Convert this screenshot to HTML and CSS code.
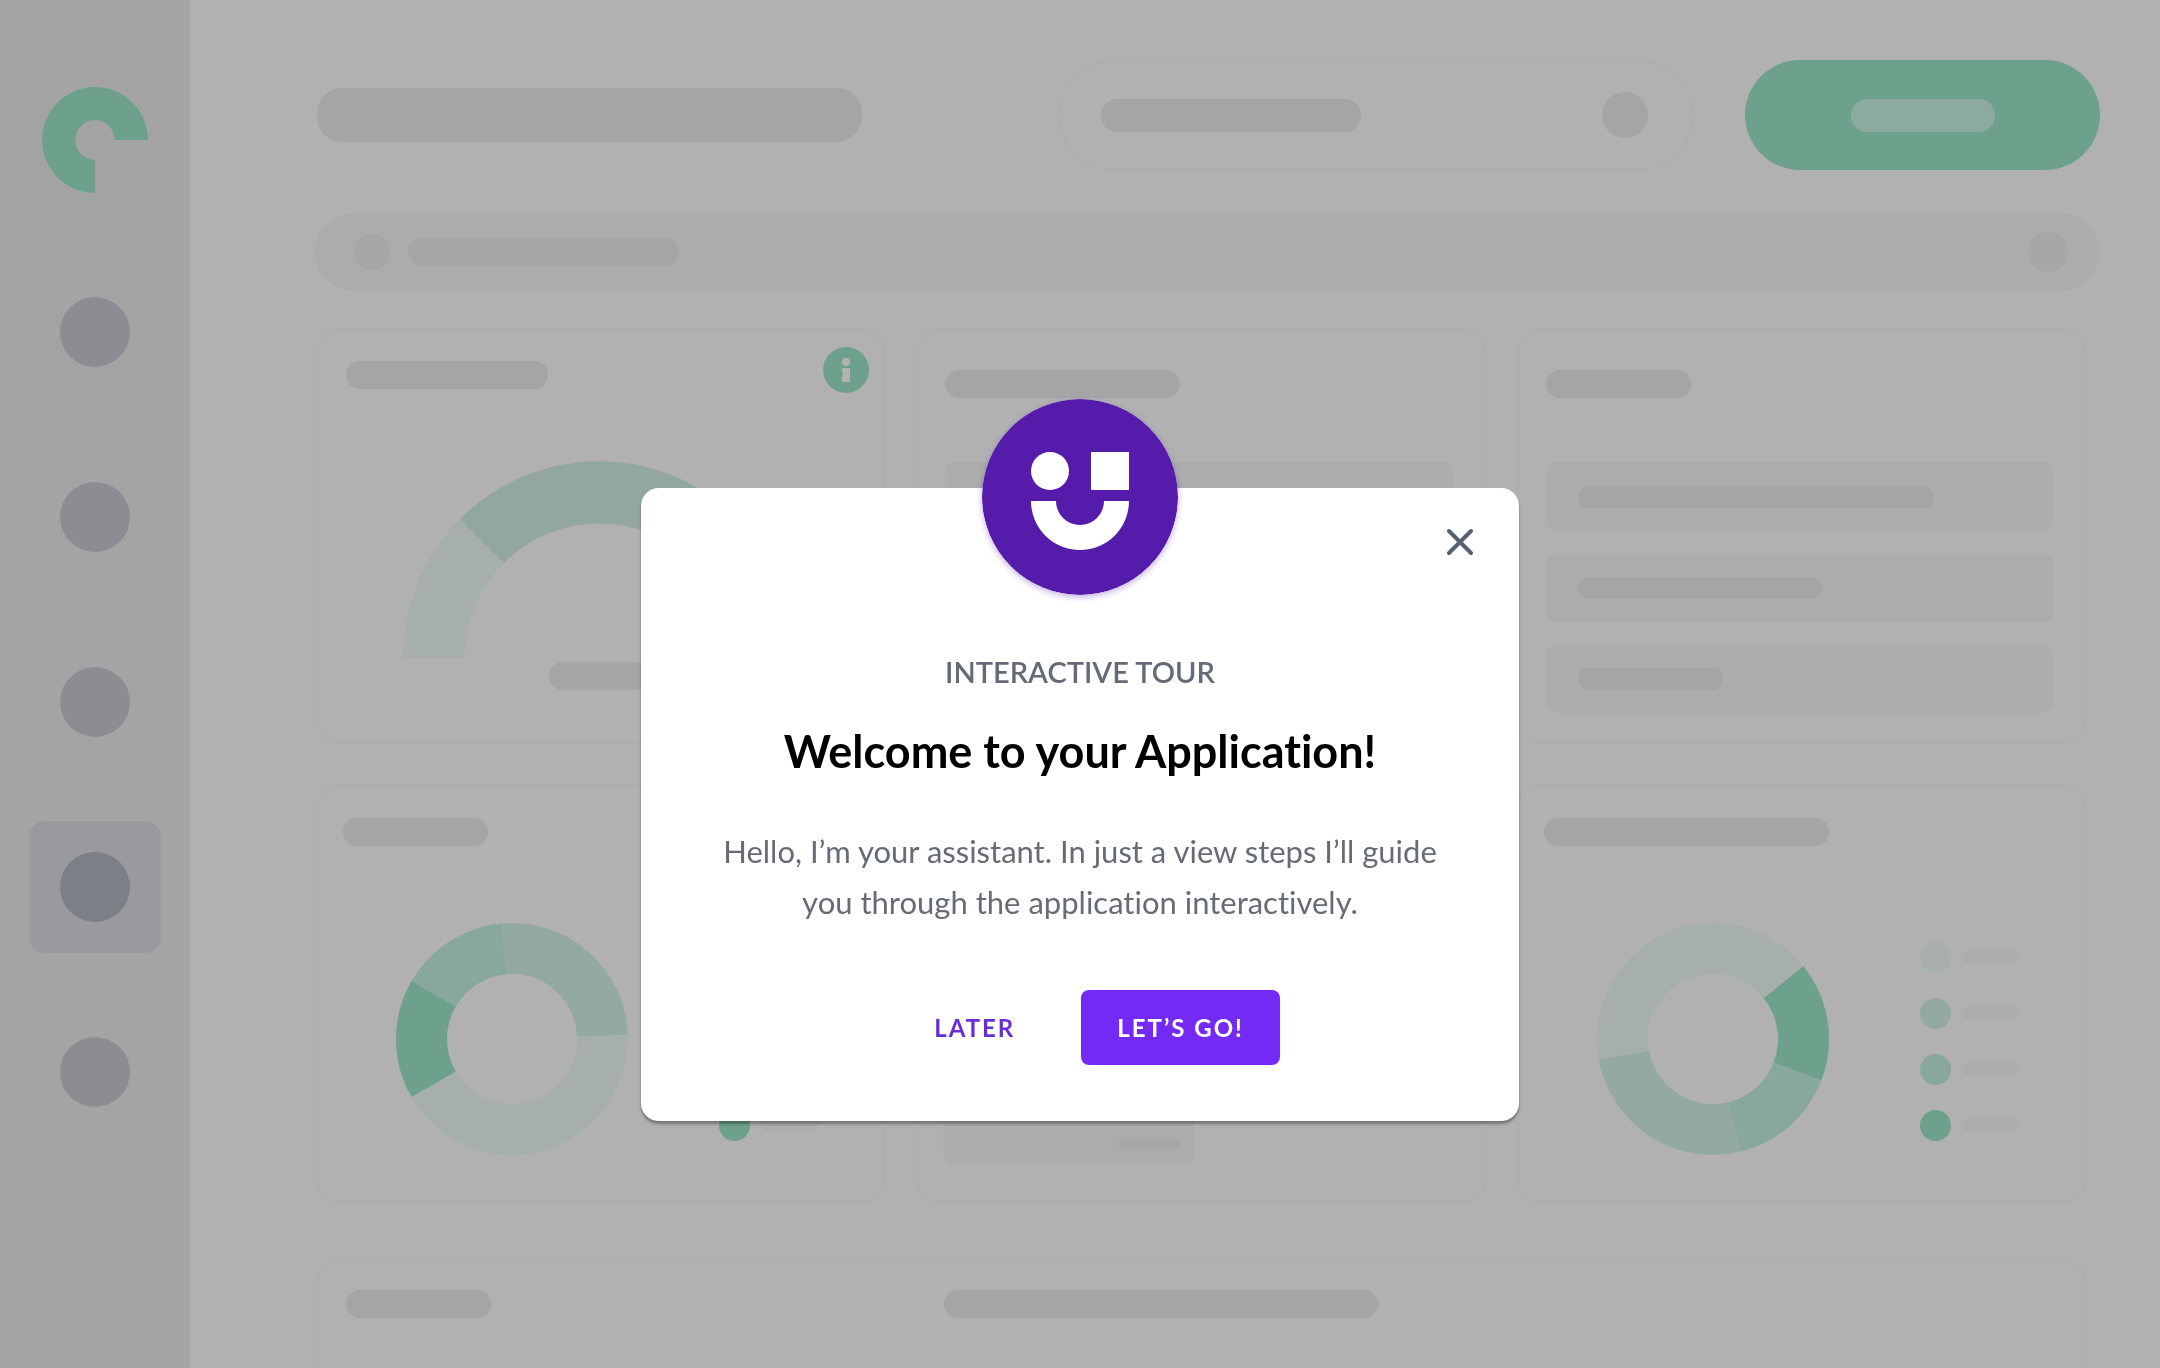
FILE: index.html
```html
<!DOCTYPE html>
<html lang="en">
<head>
<meta charset="utf-8">
<title>Interactive Tour</title>
<meta name="viewport" content="width=device-width, initial-scale=1">
<link rel="stylesheet" href="styles.css">
</head>
<body>
<div class="app" aria-hidden="true">
  <aside class="sidebar">
    <svg class="logo" viewBox="0 0 108 108">
      <path d="M54 108A54 54 0 1 1 108 54H74A20 20 0 1 0 54 74Z"/>
    </svg>
    <div class="nav">
      <div class="nav-item"><span class="nav-dot"></span></div>
      <div class="nav-item"><span class="nav-dot"></span></div>
      <div class="nav-item"><span class="nav-dot"></span></div>
      <div class="nav-item nav-item-active"><span class="nav-dot"></span></div>
      <div class="nav-item"><span class="nav-dot"></span></div>
    </div>
  </aside>

  <main class="main">
    <div class="header">
      <span class="heading"></span>
      <div class="search"><span class="bar search-text"></span><span class="search-icon"></span></div>
      <div class="action"><span class="action-label"></span></div>
    </div>

    <div class="banner">
      <span class="banner-dot"></span>
      <span class="bar banner-text"></span>
      <span class="banner-dot banner-close"></span>
    </div>

    <div class="cards">
      <section class="card card-gauge">
        <div class="card-head">
          <span class="bar w-202"></span>
          <svg class="info" viewBox="0 0 46 46">
            <circle class="c4" cx="23" cy="23" r="23"/>
            <circle class="glyph" cx="23" cy="15" r="4"/>
            <path class="glyph" d="M19 21h8v14h-8v-7h1v-3h-1z"/>
          </svg>
        </div>
        <svg class="gauge" viewBox="0 0 392 197">
          <path class="c1" d="M0 197A196 196 0 0 1 57 58L101 102A134 134 0 0 0 62 197Z"/>
          <path class="c2" d="M57 58A196 196 0 0 1 335 58L291 102A134 134 0 0 0 101 102Z"/>
          <path class="c1" d="M335 58A196 196 0 0 1 392 197H330A134 134 0 0 0 291 102Z"/>
        </svg>
        <span class="bar gauge-label"></span>
      </section>

      <section class="card card-list">
        <span class="bar w-235"></span>
        <div class="rows">
          <div class="row"></div>
        </div>
      </section>

      <section class="card card-list">
        <span class="bar w-145"></span>
        <div class="rows">
          <div class="row"><span class="bar bar-small w-356"></span></div>
          <div class="row"><span class="bar bar-small w-244"></span></div>
          <div class="row"><span class="bar bar-small w-145"></span></div>
        </div>
      </section>

      <section class="card card-chart">
        <span class="bar w-145"></span>
        <div class="chart">
          <svg class="donut" viewBox="0 0 232 232">
            <circle class="s1" cx="116" cy="116" r="90.5" pathLength="360" stroke-dasharray="152 208" transform="rotate(-2 116 116)"/>
            <circle class="s4" cx="116" cy="116" r="90.5" pathLength="360" stroke-dasharray="60 300" transform="rotate(150 116 116)"/>
            <circle class="s3" cx="116" cy="116" r="90.5" pathLength="360" stroke-dasharray="55 305" transform="rotate(210 116 116)"/>
            <circle class="s2" cx="116" cy="116" r="90.5" pathLength="360" stroke-dasharray="93 267" transform="rotate(265 116 116)"/>
          </svg>
          <ul class="legend">
            <li><i class="dot b1"></i><i class="line"></i></li>
            <li><i class="dot b2"></i><i class="line"></i></li>
            <li><i class="dot b3"></i><i class="line"></i></li>
            <li><i class="dot b4"></i><i class="line"></i></li>
          </ul>
        </div>
      </section>

      <section class="card card-chart">
        <span class="bar w-145"></span>
        <div class="tile"><span class="tile-line"></span></div>
      </section>

      <section class="card card-chart">
        <span class="bar w-285"></span>
        <div class="chart">
          <svg class="donut" viewBox="0 0 232 232">
            <circle class="s4" cx="116" cy="116" r="90.5" pathLength="360" stroke-dasharray="60 300" transform="rotate(-39 116 116)"/>
            <circle class="s3" cx="116" cy="116" r="90.5" pathLength="360" stroke-dasharray="55 305" transform="rotate(21 116 116)"/>
            <circle class="s2" cx="116" cy="116" r="90.5" pathLength="360" stroke-dasharray="94 266" transform="rotate(76 116 116)"/>
            <circle class="s1" cx="116" cy="116" r="90.5" pathLength="360" stroke-dasharray="151 209" transform="rotate(170 116 116)"/>
          </svg>
          <ul class="legend">
            <li><i class="dot b1"></i><i class="line"></i></li>
            <li><i class="dot b2"></i><i class="line"></i></li>
            <li><i class="dot b3"></i><i class="line"></i></li>
            <li><i class="dot b4"></i><i class="line"></i></li>
          </ul>
        </div>
      </section>
    </div>

    <section class="card card-wide">
      <span class="bar w-145"></span>
      <span class="bar w-434"></span>
    </section>
  </main>
</div>

<div class="overlay">
  <div class="modal" role="dialog" aria-modal="true" aria-labelledby="tour-title">
    <svg class="avatar" viewBox="0 0 196 196" aria-hidden="true">
      <circle class="avatar-bg" cx="98" cy="98" r="98"/>
      <circle cx="68" cy="72" r="19"/>
      <rect x="109" y="53" width="38" height="38"/>
      <path d="M49 102H74A24 24 0 0 0 122 102H147A49 49 0 0 1 49 102Z"/>
    </svg>
    <button class="close" type="button" aria-label="Close">
      <svg viewBox="0 0 28 28" aria-hidden="true"><path d="M3 3L25 25M25 3L3 25"/></svg>
    </button>
    <p class="kicker">INTERACTIVE TOUR</p>
    <h1 class="title" id="tour-title">Welcome to your Application!</h1>
    <p class="text">Hello, I’m your assistant. In just a view steps I’ll guide you through the application interactively.</p>
    <div class="buttons">
      <button class="btn btn-text" type="button">LATER</button>
      <button class="btn btn-primary" type="button">LET’S GO!</button>
    </div>
  </div>
</div>
</body>
</html>
```
FILE: styles.css
```css
* {
  box-sizing: border-box;
}

body {
  margin: 0;
  font-family: Lato, "Open Sans", sans-serif;
  font-variant-ligatures: none;
  background: #fefefe;
}

/* Dashboard behind the dialog */
.app {
  display: flex;
  height: 100vh;
  overflow: hidden;
}

.sidebar {
  flex: none;
  width: 190px;
  padding-top: 87px;
  background: #ebebeb;
  display: flex;
  flex-direction: column;
  align-items: center;
}

.logo {
  flex: none;
  width: 106px;
  height: 106px;
  fill: #9de7c7;
}

.nav {
  margin-top: 73px;
  display: flex;
  flex-direction: column;
  gap: 53px;
}

.nav-item {
  width: 132px;
  height: 132px;
  border-radius: 16px;
  display: flex;
  align-items: center;
  justify-content: center;
}

.nav-item-active {
  background: #dcdbe3;
}

.nav-dot {
  width: 70px;
  height: 70px;
  border-radius: 50%;
  background: #cbc9d3;
}

.nav-item-active .nav-dot {
  background: #b1b7c2;
}

.main {
  flex: 1;
  min-width: 0;
  padding: 58px 60px 0 124px;
  display: flex;
  flex-direction: column;
}

.bar {
  display: block;
  flex: none;
  height: 28px;
  border-radius: 14px;
  background: #ececec;
}

.bar-small {
  height: 22px;
  border-radius: 11px;
}

.w-145 { width: 145px; }
.w-202 { width: 202px; }
.w-235 { width: 235px; }
.w-244 { width: 244px; }
.w-285 { width: 285px; }
.w-356 { width: 356px; }
.w-434 { width: 434px; }

.header {
  display: flex;
  align-items: center;
  flex: none;
}

.heading {
  width: 545px;
  height: 54px;
  margin-left: 3px;
  border-radius: 25px;
  background: #ececec;
}

.search {
  width: 638px;
  height: 114px;
  margin-left: auto;
  padding: 0 43px 0 40px;
  border: 4px solid #fbfbfb;
  border-radius: 57px;
  display: flex;
  align-items: center;
  justify-content: space-between;
}

.search-text {
  width: 260px;
  height: 33px;
  border-radius: 16px;
}

.search-icon {
  width: 46px;
  height: 46px;
  border-radius: 50%;
  background: #ececec;
}

.action {
  width: 355px;
  height: 110px;
  margin-left: 50px;
  border-radius: 55px;
  background: #9de7c7;
  display: flex;
  align-items: center;
  justify-content: center;
}

.action-label {
  width: 144px;
  height: 33px;
  border-radius: 16px;
  background: #cbf4e5;
}

.banner {
  flex: none;
  height: 78px;
  margin-top: 41px;
  padding: 0 32px 0 40px;
  border-radius: 39px;
  background: #f6f6f6;
  display: flex;
  align-items: center;
}

.banner-dot {
  width: 36px;
  height: 36px;
  border-radius: 50%;
  background: #efefef;
}

.banner-close {
  width: 40px;
  height: 40px;
  margin-left: auto;
}

.banner-text {
  width: 270px;
  margin-left: 18px;
}

.cards {
  margin: 37px 13px 0 1px;
  display: grid;
  grid-template-columns: repeat(3, 1fr);
  grid-template-rows: 416px 420px;
  gap: 40px 29px;
  flex: none;
}

.card {
  border: 4px solid #fbfbfb;
  border-radius: 24px;
}

.card-gauge {
  padding: 15px 13px 0 27px;
}

.card-head {
  display: flex;
  align-items: flex-start;
  justify-content: space-between;
}

.card-head .bar {
  margin-top: 14px;
}

.info {
  width: 46px;
  height: 46px;
}

.gauge {
  display: block;
  width: 392px;
  height: 197px;
  margin: 68px 0 0 57px;
}

.gauge-label {
  width: 120px;
  margin: 4px 0 0 203px;
}

.c1 { fill: #f0fbf7; }
.c2 { fill: #d2f0e5; }
.c4 { fill: #9de7c7; }
.glyph { fill: #fff; }

.card-list {
  padding: 38px 30px 0 26px;
}

.rows {
  margin-top: 64px;
  display: flex;
  flex-direction: column;
  gap: 22px;
}

.row {
  height: 69px;
  padding-left: 32px;
  border-radius: 10px;
  background: #f6f6f6;
  display: flex;
  align-items: center;
}

.card-chart {
  padding: 30px 24px 0;
}

.chart {
  margin: 77px 0 0 53px;
  display: flex;
  align-items: center;
  gap: 91px;
}

.donut {
  width: 232px;
  height: 232px;
  fill: none;
  stroke-width: 51px;
}

.s1 { stroke: #f0fbf7; }
.s2 { stroke: #d2f4e6; }
.s3 { stroke: #c2f1dd; }
.s4 { stroke: #9de7c7; }

.legend {
  margin: 0;
  padding: 4px 0 0;
  list-style: none;
  display: flex;
  flex-direction: column;
  gap: 25px;
}

.legend li {
  display: flex;
  align-items: center;
  gap: 11px;
}

.dot {
  width: 31px;
  height: 31px;
  border-radius: 50%;
}

.b1 { background: #f0fbf7; }
.b2 { background: #d2f4e6; }
.b3 { background: #c2f1dd; }
.b4 { background: #9de7c7; }

.line {
  width: 58px;
  height: 12px;
  border-radius: 6px;
  background: #f6f6f6;
}

.tile {
  width: 251px;
  height: 274px;
  margin-top: 44px;
  padding: 0 14px 13px 0;
  border-radius: 10px;
  background: #f6f6f6;
  display: flex;
  align-items: flex-end;
  justify-content: flex-end;
}

.tile-line {
  width: 62px;
  height: 14px;
  border-radius: 7px;
  background: #efefef;
}

.card-wide {
  flex: 1 0 auto;
  margin: 54px 13px 0 1px;
  padding: 28px 27px 0;
  border-bottom: 0;
  border-radius: 24px 24px 0 0;
  display: grid;
  grid-template-columns: repeat(3, 1fr);
  column-gap: 84px;
  align-items: start;
}

/* Dialog */
.overlay {
  position: fixed;
  inset: 0;
  padding-top: 488px;
  background: rgba(0, 0, 0, 0.3);
  display: flex;
  align-items: flex-start;
  justify-content: center;
}

.modal {
  position: relative;
  width: 878px;
  max-width: 100%;
  padding: 166px 80px 56px;
  border-radius: 18px;
  background: #fff;
  box-shadow: 0 3px 3px rgba(0, 0, 0, 0.35);
  text-align: center;
}

.avatar {
  position: absolute;
  top: -89px;
  left: 50%;
  width: 196px;
  height: 196px;
  margin-left: -98px;
  border-radius: 50%;
  box-shadow: 0 2px 6px rgba(85, 27, 171, 0.35);
  fill: #fff;
}

.avatar-bg {
  fill: #551bab;
}

.close {
  position: absolute;
  top: 32px;
  right: 37px;
  width: 44px;
  height: 44px;
  padding: 8px;
  border: 0;
  background: none;
}

.close svg {
  display: block;
  width: 28px;
  height: 28px;
  fill: none;
  stroke: #566074;
  stroke-width: 4px;
  stroke-linecap: round;
}

.kicker {
  margin: 0;
  font-size: 29px;
  line-height: 36px;
  font-weight: 600;
  color: #646a77;
}

.title {
  margin: 31px 0 0;
  font-size: 45px;
  line-height: 60px;
  font-weight: 700;
  color: #000;
}

.text {
  margin: 45px 0 0;
  font-size: 31px;
  line-height: 51px;
  color: #666b76;
}

.buttons {
  margin-top: 62px;
  display: flex;
  justify-content: center;
  gap: 12px;
}

.btn {
  height: 75px;
  padding: 0 36px;
  border: 0;
  border-radius: 8px;
  font-family: inherit;
  font-size: 24px;
  font-weight: 700;
  letter-spacing: 2px;
}

.btn-text {
  padding: 0 54px;
  background: none;
  color: #6a2bd9;
}

.btn-primary {
  background: #7429f4;
  color: #fff;
}
```
